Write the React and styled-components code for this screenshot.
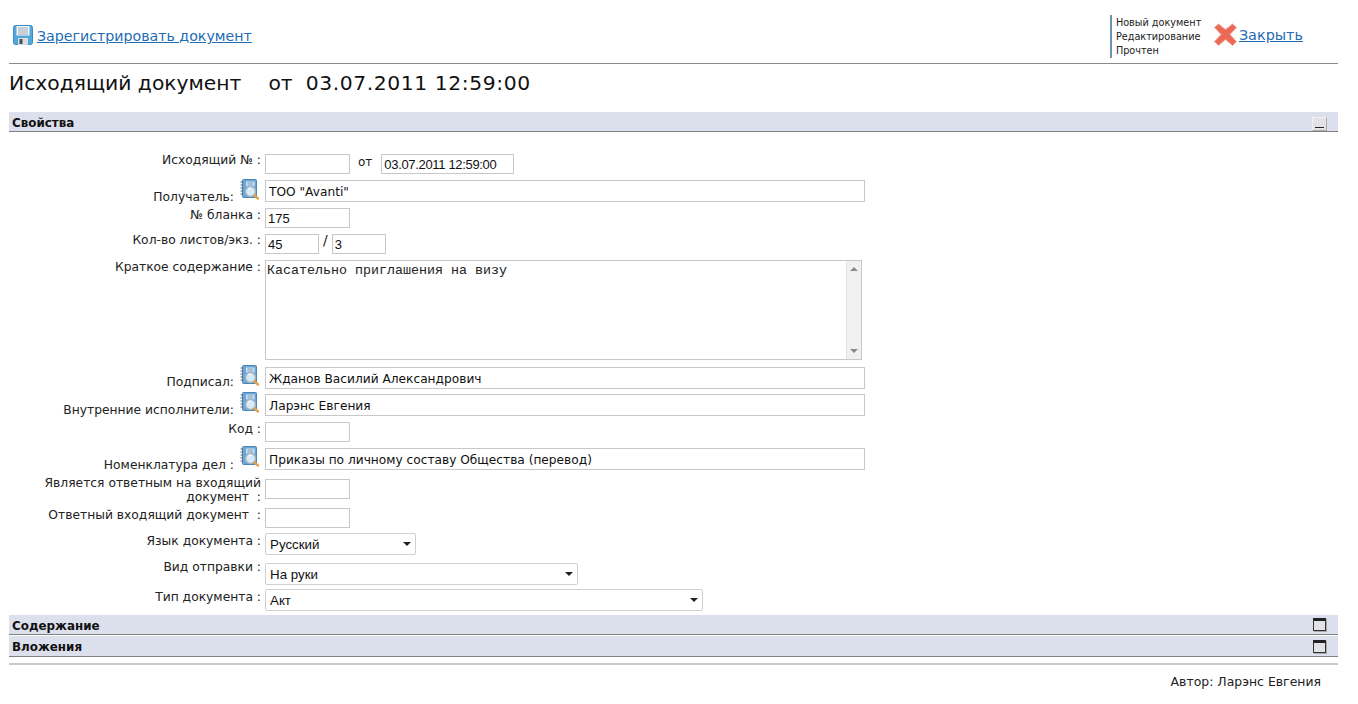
import React from "react";
import styled, { createGlobalStyle } from "styled-components";

const Global = createGlobalStyle`
  html, body { margin: 0; padding: 0; background: #fff; }
  body { font-family: "DejaVu Sans", Verdana, sans-serif; color: #1a1a1a; }
`;
const Page = styled.div`
  width: 1329px;
  height: 704px;
  margin-left: 9px;
  overflow: hidden;
`;
const TopBar = styled.header`
  height: 63px;
  border-bottom: 1px solid #8a8a8a;
  display: flex;
  align-items: flex-start;
  justify-content: space-between;
`;
const SaveAction = styled.div`
  display: flex;
  align-items: center;
  gap: 4px;
  margin: 24px 0 0 4px;
`;
const ActionLink = styled.a`
  font-size: ${p => p.$size}px;
  line-height: 20px;
  margin-top: 2px;
  color: #1f6cb4;
  text-decoration: underline;
  cursor: pointer;
`;
const RightActions = styled.div`
  display: flex;
  align-items: flex-start;
  margin: 15px 35px 0 0;
`;
const StatusList = styled.ul`
  list-style: none;
  margin: 0;
  padding: 0 0 0 4px;
  height: 43px;
  width: 98px;
  border-left: 2px solid #6f93b0;
  font-size: 9.7px;
  line-height: 14px;
  color: #222;
  li:first-child { margin-top: 1px; }
`;
const CloseAction = styled.div`
  display: flex;
  align-items: flex-start;
  gap: 2px;
  margin-top: 8px;
`;
const Title = styled.h1`
  display: flex;
  margin: 8px 0 17px;
  height: 23px;
  font-size: 20.3px;
  line-height: 23px;
  font-weight: 400;
  color: #111;
`;
const TitlePart = styled.span`
  margin-left: ${p => p.$gap || 0}px;
  letter-spacing: ${p => p.$track || 0}px;
`;
const SectionBar = styled.div`
  box-sizing: content-box;
  height: ${p => p.$h}px;
  background: #dcdfec;
  border-bottom: 1px solid #808080;
  display: flex;
  align-items: center;
  justify-content: space-between;
  padding: 0 11px 0 3px;
  margin-top: ${p => p.$mt || 0}px;
  font-size: 11.9px;
  font-weight: 700;
  color: #111;
`;
const SectionTitle = styled.span`
  padding-top: 2px;
`;
const MinButton = styled.span`
  width: 15px;
  height: 14px;
  box-sizing: border-box;
  background: #e3e3e6;
  border: 1px solid #f2f2f4;
  border-right-color: #a8a8ae;
  border-bottom-color: #a8a8ae;
  margin: 4px 0 0;
  position: relative;
  &::after {
    content: "";
    position: absolute;
    left: 2px;
    right: 2px;
    bottom: 2px;
    height: 1px;
    background: #222;
  }
`;
const MaxButton = styled.span`
  width: 13px;
  height: 13px;
  box-sizing: border-box;
  background: #e3e3e6;
  border: 1px solid #333;
  border-top: 3px solid #222;
  margin-right: 1px;
  box-shadow: 1px 1px 0 #aaa;
`;
const Form = styled.div`
  padding-top: 21px;
`;
const Row = styled.div`
  display: grid;
  grid-template-columns: 252px 1fr;
  column-gap: 4px;
  height: ${p => p.$h}px;
`;
const LabelCell = styled.div`
  display: flex;
  justify-content: flex-end;
  align-items: flex-start;
  gap: 6px;
  padding-right: ${p => (p.$icon ? 1 : 0)}px;
`;
const LabelText = styled.label`
  display: block;
  margin-top: ${p => p.$top || 0}px;
  font-size: 12.3px;
  line-height: 14px;
  text-align: right;
  color: #222;
  white-space: pre-wrap;
`;
const Controls = styled.div`
  display: flex;
  align-items: flex-start;
  padding-top: ${p => p.$top || 0}px;
`;
const TextInput = styled.input`
  box-sizing: border-box;
  width: ${p => p.$w}px;
  height: ${p => (p.$tall ? 22 : 20)}px;
  margin: 0;
  padding: ${p => (p.$arial ? "1px 2px 0" : "1px 3px 0")};
  border: 1px solid #c8c8c8;
  border-radius: 0;
  outline: none;
  background: #fff;
  color: #111;
  font-family: ${p => (p.$arial ? '"Liberation Sans", Arial, sans-serif' : '"DejaVu Sans", Verdana, sans-serif')};
  font-size: ${p => (p.$arial ? 13 : 12.2)}px;
  ${p => (p.$narrow ? "letter-spacing: -0.33px;" : "")}
`;
const Between = styled.span`
  font-size: ${p => p.$size}px;
  line-height: 14px;
  margin: ${p => p.$m};
  color: #222;
`;
const MemoBox = styled.div`
  box-sizing: border-box;
  display: flex;
  width: 597px;
  height: 100px;
  border: 1px solid #c8c8c8;
`;
const Memo = styled.textarea`
  flex: 1;
  margin: 0;
  padding: 2px 2px 2px 1px;
  border: 0;
  outline: none;
  resize: none;
  overflow: hidden;
  font-family: "Liberation Mono", "Courier New", monospace;
  font-size: 13.33px;
  line-height: 15px;
  color: #222;
`;
const Scrollbar = styled.div`
  width: 15px;
  background: #f0f0f0;
  border-left: 1px solid #e4e4e4;
  display: flex;
  flex-direction: column;
  justify-content: space-between;
  align-items: center;
  padding: 6px 0;
  box-sizing: border-box;
`;
const ScrollArrow = styled.span`
  width: 0;
  height: 0;
  border-left: 4px solid transparent;
  border-right: 4px solid transparent;
  ${p => (p.$down ? "border-top: 4px solid #8a8a8a;" : "border-bottom: 4px solid #8a8a8a;")}
`;
const SelectWrap = styled.div`
  position: relative;
  width: ${p => p.$w}px;
  height: 22px;
  &::after {
    content: "";
    position: absolute;
    right: 5px;
    top: 9px;
    border-left: 4px solid transparent;
    border-right: 4px solid transparent;
    border-top: 4px solid #222;
    pointer-events: none;
  }
`;
const Select = styled.select`
  appearance: none;
  box-sizing: border-box;
  display: block;
  width: 100%;
  height: 100%;
  margin: 0;
  padding: 0 0 0 4px;
  border: 1px solid #d0d0d0;
  border-radius: 2px;
  outline: none;
  background: #fff;
  color: #111;
  font-family: "Liberation Sans", Arial, sans-serif;
  font-size: 13.33px;
`;
const Rule = styled.div`
  height: 2px;
  margin-top: 6px;
  background: #c9c9c9;
`;
const Author = styled.div`
  margin: 10px 17px 0 0;
  text-align: right;
  font-size: 12.45px;
  line-height: 14px;
  color: #222;
`;

const Floppy = () => (
  <svg width="20" height="20" viewBox="0 0 20 20">
    <rect x="0.5" y="0.5" width="19" height="19" rx="2" fill="#52a7dc" stroke="#3b8cc4" />
    <rect x="3.5" y="1" width="13" height="9.5" fill="#f4f6f8" />
    <path d="M5 3h10M5 5h10M5 7h10M5 9h10" stroke="#9aa8b4" strokeWidth="1" />
    <rect x="5" y="13" width="10" height="7" fill="#d8dde2" />
    <rect x="6.5" y="14" width="3" height="5" fill="#44525e" />
  </svg>
);
const CrossIcon = () => (
  <svg width="23" height="23" viewBox="0 0 23 23">
    <path d="M4.5 1 11.5 6.5 18.5 1 22.5 4.5 16 11.5 22.5 18.5 18.5 22.5 11.5 16.5 4.5 22.5 0.5 18.5 7 11.5 0.5 4.5Z" fill="#ec6a55" stroke="#eda798" strokeWidth="1" strokeLinejoin="round" />
  </svg>
);
const BookIcon = () => (
  <svg width="20" height="21" viewBox="0 0 20 21">
    <rect x="2.5" y="0.5" width="14" height="18" rx="1" fill="#6ba6d6" stroke="#4a86b6" />
    <path d="M3 3H0.5M3 6H0.5M3 9H0.5M3 12H0.5M3 15H0.5" stroke="#54677a" strokeWidth="1" />
    <rect x="6" y="2.5" width="8.5" height="5" fill="#cfe2f1" />
    <path d="M7.5 4h5.5M7.5 6h5.5" stroke="#7f9fb9" strokeWidth="1" />
    <circle cx="10.5" cy="12.5" r="5" fill="#d6ebf7" stroke="#a5b3bc" strokeWidth="1.4" />
    <path d="M8 10.5a3.5 3.5 0 0 1 3-1.5" fill="none" stroke="#fff" strokeWidth="1" />
    <path d="M14.5 16.5 18 19.5" stroke="#e3a24a" strokeWidth="2.4" strokeLinecap="round" />
  </svg>
);

const Field = ({ h, label, labelTop, top, icon, children }) => (
  <Row $h={h}>
    <LabelCell $icon={icon}>
      <LabelText $top={labelTop}>{label}</LabelText>
      {icon && <BookIcon />}
    </LabelCell>
    <Controls $top={top}>{children}</Controls>
  </Row>
);

const Dropdown = ({ w, value }) => (
  <SelectWrap $w={w}>
    <Select defaultValue={value}><option>{value}</option></Select>
  </SelectWrap>
);

export default function App() {
  return (
    <Page>
      <Global />
      <TopBar>
        <SaveAction>
          <Floppy />
          <ActionLink $size={14.2}>Зарегистрировать документ</ActionLink>
        </SaveAction>
        <RightActions>
          <StatusList>
            <li>Новый документ</li>
            <li>Редактирование</li>
            <li>Прочтен</li>
          </StatusList>
          <CloseAction>
            <CrossIcon />
            <ActionLink $size={14.4}>Закрыть</ActionLink>
          </CloseAction>
        </RightActions>
      </TopBar>
      <Title>
        <TitlePart>Исходящий документ</TitlePart>
        <TitlePart $gap={27}>от</TitlePart>
        <TitlePart $gap={13} $track={0.6}>03.07.2011 12:59:00</TitlePart>
      </Title>
      <SectionBar $h={19}>
        <SectionTitle>Свойства</SectionTitle>
        <MinButton />
      </SectionBar>
      <Form>
        <Field h={26} label="Исходящий № :" labelTop={0} top={1}>
          <TextInput $w={85} />
          <Between $size={12} $m="1px 9px 0 8px">от</Between>
          <TextInput $w={133} $arial $narrow defaultValue="03.07.2011 12:59:00" />
        </Field>
        <Field h={29} label="Получатель:" labelTop={11} top={1} icon>
          <TextInput $w={600} $tall defaultValue={'ТОО "Avanti"'} />
        </Field>
        <Field h={26} label="№ бланка :" labelTop={0}>
          <TextInput $w={85} $arial defaultValue="175" />
        </Field>
        <Field h={26} label="Кол-во листов/экз. :" labelTop={-1}>
          <TextInput $w={54} $arial defaultValue="45" />
          <Between $size={14} $m="-1px 4px 0 4px">/</Between>
          <TextInput $w={54} $arial defaultValue="3" />
        </Field>
        <Field h={105} label="Краткое содержание :" labelTop={0}>
          <MemoBox>
            <Memo defaultValue="Касательно приглашения на визу" />
            <Scrollbar><ScrollArrow /><ScrollArrow $down /></Scrollbar>
          </MemoBox>
        </Field>
        <Field h={27} label="Подписал:" labelTop={10} top={2} icon>
          <TextInput $w={600} $tall defaultValue="Жданов Василий Александрович" />
        </Field>
        <Field h={30} label="Внутренние исполнители:" labelTop={11} top={2} icon>
          <TextInput $w={600} $tall defaultValue="Ларэнс Евгения" />
        </Field>
        <Field h={24} label="Код :" labelTop={0}>
          <TextInput $w={85} />
        </Field>
        <Field h={30} label="Номенклатура дел :" labelTop={12} top={2} icon>
          <TextInput $w={600} $tall defaultValue="Приказы по личному составу Общества (перевод)" />
        </Field>
        <Field h={30} label={"Является ответным на входящий\nдокумент  :"} labelTop={0} top={3}>
          <TextInput $w={85} />
        </Field>
        <Field h={26} label="Ответный входящий документ  :" labelTop={2} top={2}>
          <TextInput $w={85} />
        </Field>
        <Field h={29} label="Язык документа :" labelTop={2} top={1}>
          <Dropdown w={151} value="Русский" />
        </Field>
        <Field h={26} label="Вид отправки :" labelTop={-1} top={2}>
          <Dropdown w={313} value="На руки" />
        </Field>
        <Field h={28} label="Тип документа :" labelTop={3} top={2}>
          <Dropdown w={438} value="Акт" />
        </Field>
      </Form>
      <SectionBar $h={19}>
        <SectionTitle>Содержание</SectionTitle>
        <MaxButton />
      </SectionBar>
      <SectionBar $h={20} $mt={1}>
        <SectionTitle>Вложения</SectionTitle>
        <MaxButton />
      </SectionBar>
      <Rule />
      <Author>Автор: Ларэнс Евгения</Author>
    </Page>
  );
}
